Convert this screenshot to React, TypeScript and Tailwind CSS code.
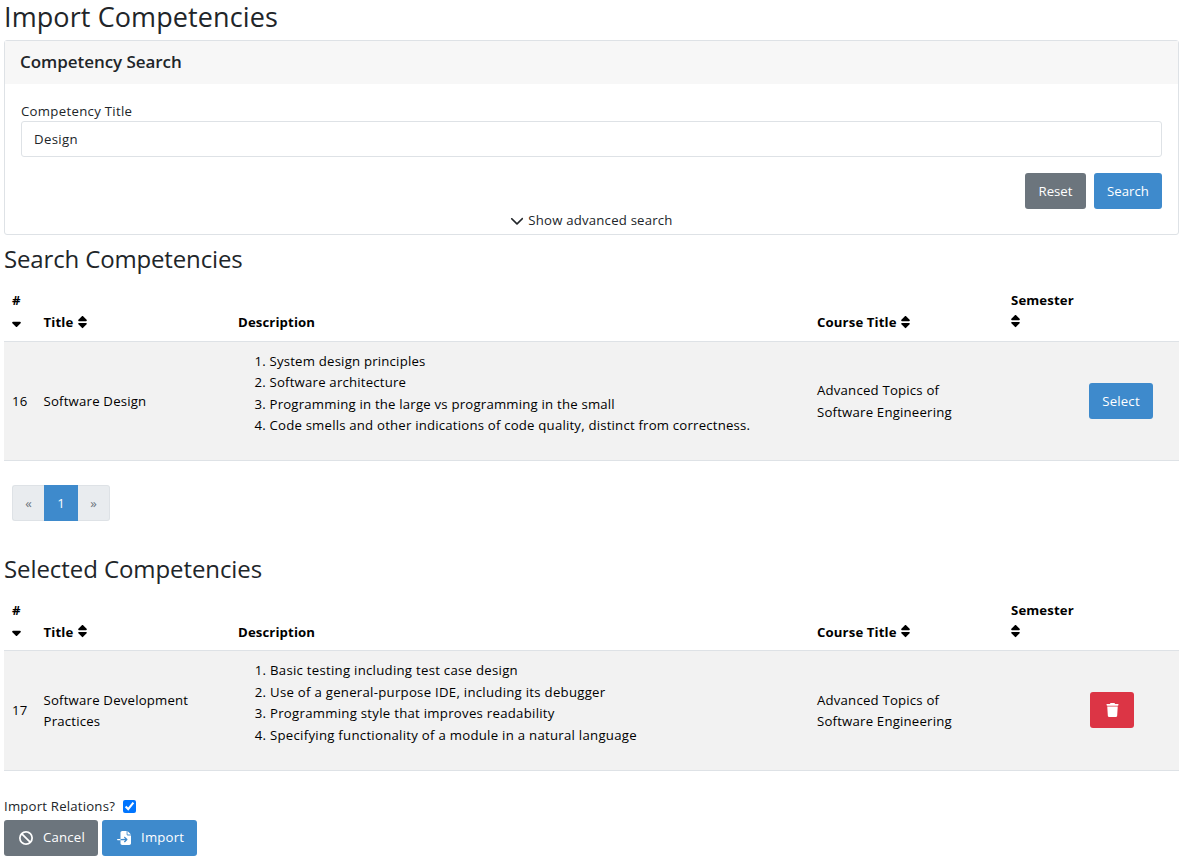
import type { ReactNode } from "react";
import { FaBan, FaChevronDown, FaFileImport, FaSort, FaSortDown, FaTrash } from "react-icons/fa6";

interface Competency {
  id: number;
  title: string;
  description: string[];
  course: string;
}

const found: Competency = {
  id: 16,
  title: "Software Design",
  description: [
    "System design principles",
    "Software architecture",
    "Programming in the large vs programming in the small",
    "Code smells and other indications of code quality, distinct from correctness.",
  ],
  course: "Advanced Topics of Software Engineering",
};

const selected: Competency = {
  id: 17,
  title: "Software Development Practices",
  description: [
    "Basic testing including test case design",
    "Use of a general-purpose IDE, including its debugger",
    "Programming style that improves readability",
    "Specifying functionality of a module in a natural language",
  ],
  course: "Advanced Topics of Software Engineering",
};

function CompetencyTable({ item, action, listClass }: { item: Competency; action: ReactNode; listClass: string }) {
  return (
    <table className="w-full table-fixed border-collapse text-left text-black">
      <colgroup>
        <col className="w-[31.5px]" />
        <col className="w-[194.5px]" />
        <col className="w-[579px]" />
        <col className="w-[194px]" />
        <col className="w-[78px]" />
        <col />
      </colgroup>
      <thead>
        <tr className="h-[59px] border-b border-[#dee2e6] align-bottom text-[13.2px] font-bold tracking-[0.12px]">
          <th className="px-2 pb-[7px]">
            #
            <FaSortDown className="mb-[6px] mt-[2px] h-[14px] w-[9px]" />
          </th>
          <th className="px-2 pb-[7px]">
            Title <FaSort className="ml-px inline h-[14px] w-[9px] align-[-1.5px]" />
          </th>
          <th className="px-2 pb-[7px]">Description</th>
          <th className="px-2 pb-[7px]">
            Course Title <FaSort className="ml-px inline h-[14px] w-[9px] align-[-1.5px]" />
          </th>
          <th className="px-2 pb-[7px]">
            Semester <FaSort className="mb-[5.5px] mt-[2.5px] h-[14px] w-[9px]" />
          </th>
          <th />
        </tr>
      </thead>
      <tbody>
        <tr className="h-[119.5px] border-b border-[#dee2e6] bg-[#f2f2f2]">
          <td className="px-2 pt-px">{item.id}</td>
          <td className="px-2 pt-[2px]">{item.title}</td>
          <td className="px-2 pb-[14px]">
            <ol className={listClass}>
              {item.description.map((line) => (
                <li key={line}>{line}</li>
              ))}
            </ol>
          </td>
          <td className="pl-2 pr-7 pt-[2px]">{item.course}</td>
          <td />
          <td className="px-2">{action}</td>
        </tr>
      </tbody>
    </table>
  );
}

export default function App() {
  return (
    <main className="h-[867px] w-[1183px] bg-white px-1 font-['Open_Sans','Noto_Sans',sans-serif] text-[13.2px] leading-[21.5px] tracking-[0.2px] text-[#212529]">
      <h1 className="h-10 text-[27px] leading-[34px] tracking-[0.1px]">Import Competencies</h1>

      <section className="h-[195px] rounded-[3px] border border-[#dee2e6]">
        <h2 className="h-[43px] bg-[#f7f7f7] px-[15px] text-[17px] font-semibold leading-[42px] tracking-[-0.05px]">
          Competency Search
        </h2>
        <div className="px-4 pt-[17px]">
          <label className="block h-5 tracking-[0.3px]" htmlFor="title">Competency Title</label>
          <input
            id="title"
            defaultValue="Design"
            className="block h-9 w-full rounded-[3px] border border-[#dee2e6] px-3 tracking-[0.35px]"
          />
          <div className="mt-4 flex justify-end gap-2 tracking-normal text-white">
            <button className="h-9 w-[61px] rounded-[3px] bg-[#6c757d] pt-px">Reset</button>
            <button className="h-9 w-[68px] rounded-[3px] bg-[#3e8acc] pt-px">Search</button>
          </div>
          <div className="flex items-center justify-center gap-1 pt-px">
            <FaChevronDown className="h-[15px] w-[14px]" />
            <span>Show advanced search</span>
          </div>
        </div>
      </section>

      <h2 className="h-[47px] pt-2 text-[24px] leading-[31px] tracking-[-0.15px]">Search Competencies</h2>
      <CompetencyTable
        item={found}
        listClass="list-decimal pl-[31.5px]"
        action={<button className="h-9 w-16 rounded-[3px] bg-[#3e8acc] pt-px text-white">Select</button>}
      />

      <nav className="ml-2 mt-6 flex h-9 w-[98px] leading-9">
        <span className="w-8 rounded-l-[3px] border border-r-0 border-[#dee2e6] bg-[#e9ecef] text-center leading-[35px] text-[#6c757d]">«</span>
        <span className="w-[34px] bg-[#3e8acc] text-center text-white">1</span>
        <span className="w-8 rounded-r-[3px] border border-l-0 border-[#dee2e6] bg-[#e9ecef] text-center leading-[35px] text-[#6c757d]">»</span>
      </nav>

      <h2 className="mt-8 h-[38.5px] text-[24px] leading-[31px] tracking-[-0.08px]">Selected Competencies</h2>
      <CompetencyTable
        item={selected}
        listClass="list-decimal pl-8 tracking-[0.27px]"
        action={
          <button aria-label="Remove" className="ml-px flex h-9 w-11 items-center justify-center rounded-[3px] bg-[#dc3545] text-white">
            <FaTrash className="h-[14px] w-[13px]" />
          </button>
        }
      />

      <div className="mt-[23px] flex h-[26px] items-center gap-2">
        <label htmlFor="relations">Import Relations?</label>
        <input id="relations" type="checkbox" defaultChecked className="mb-px h-[13px] w-[13px] accent-[#0075ff]" />
      </div>
      <div className="flex gap-1 text-white">
        <button className="flex h-9 w-[94px] items-center rounded-[3px] bg-[#6c757d] pl-[15px]">
          <FaBan className="mr-[10px] h-[14px] w-[14px]" />
          <span className="pt-px">Cancel</span>
        </button>
        <button className="flex h-9 w-[95px] items-center rounded-[3px] bg-[#3e8acc] pl-[15px]">
          <FaFileImport className="mr-[10px] h-[14px] w-[14px]" />
          <span className="pt-px">Import</span>
        </button>
      </div>
    </main>
  );
}
